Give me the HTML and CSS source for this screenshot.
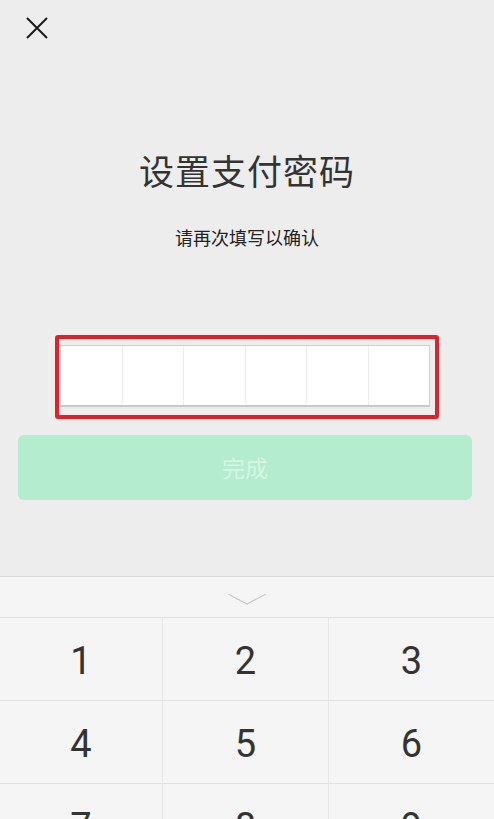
FILE: index.html
```html
<!DOCTYPE html>
<html lang="zh">
<head>
<meta charset="utf-8">
<link rel="stylesheet" href="styles.css">
</head>
<body>
<div class="page">
  <div class="topbar">
    <svg class="close" width="22" height="22" viewBox="0 0 22 22"><path d="M1 1 L21 21 M21 1 L1 21" stroke="#1a1a1a" stroke-width="2" fill="none"/></svg>
  </div>
  <h1 class="title">设置支付密码</h1>
  <p class="subtitle">请再次填写以确认</p>
  <div class="mark">
    <div class="pin">
      <div class="cell"></div><div class="cell"></div><div class="cell"></div><div class="cell"></div><div class="cell"></div><div class="cell"></div>
    </div>
  </div>
  <div class="done">完成</div>
  <div class="keyboard">
    <div class="kb-head">
      <svg width="40" height="12" viewBox="0 0 40 12"><path d="M1 1 L20 11 L39 1" stroke="#c8c8c8" stroke-width="1.2" fill="none"/></svg>
    </div>
    <div class="keys">
      <div class="key">1</div><div class="key">2</div><div class="key">3</div>
      <div class="key">4</div><div class="key">5</div><div class="key">6</div>
      <div class="key">7</div><div class="key">8</div><div class="key">9</div>
    </div>
  </div>
</div>
</body>
</html>
```
FILE: styles.css
```css
html, body {
  margin: 0;
  padding: 0;
  background: #ededed;
  overflow: hidden;
}
.page {
  width: 494px;
  height: 819px;
  overflow: hidden;
  font-family: "Noto Sans CJK SC", "Noto Sans", sans-serif;
}
.topbar {
  height: 56px;
  padding: 17px 0 0 26px;
  box-sizing: border-box;
}
.close { display: block; }
.title {
  margin: 94px 0 0;
  font-size: 35px;
  line-height: 40px;
  font-weight: 400;
  color: #333;
  text-align: center;
  letter-spacing: 1px;
}
.subtitle {
  margin: 35px 0 0;
  font-size: 18px;
  line-height: 24px;
  color: #222;
  text-align: center;
}
.mark {
  margin: 86px 0 0 55px;
  width: 384px;
  height: 84px;
  box-sizing: border-box;
  border: 4px solid #e0212c;
  border-radius: 3px;
  padding: 6px 0 0 1px;
}
.pin {
  width: 370px;
  height: 62px;
  box-sizing: border-box;
  display: flex;
  background: #fff;
  border: 1px solid #cfcfcf;
  border-bottom: 2px solid #c8c8c8;
}
.cell {
  flex: 1;
  border-left: 1px solid #ececec;
}
.cell:first-child { border-left: none; }
.done {
  margin: 16px 0 0 18px;
  width: 454px;
  height: 65px;
  border-radius: 6px;
  background: #b3ecce;
  color: #d6f6e4;
  font-size: 23px;
  line-height: 65px;
  text-align: center;
}
.keyboard {
  margin-top: 76px;
  background: #f5f5f5;
  border-top: 1px solid #dadada;
}
.kb-head {
  height: 41px;
  display: flex;
  justify-content: center;
  align-items: flex-start;
  padding-top: 16px;
  box-sizing: border-box;
  border-bottom: 1px solid #e0e0e0;
}
.keys {
  display: grid;
  grid-template-columns: 162px 166px 1fr;
  grid-auto-rows: 83px;
}
.key {
  display: flex;
  align-items: center;
  justify-content: center;
  padding-top: 4px;
  font-family: Roboto, "Noto Sans", sans-serif;
  font-size: 38px;
  color: #333;
  border-bottom: 1px solid #e0e0e0;
  border-left: 1px solid #e6e6e6;
  box-sizing: border-box;
}
.key:nth-child(3n+1) { border-left: none; }
```
